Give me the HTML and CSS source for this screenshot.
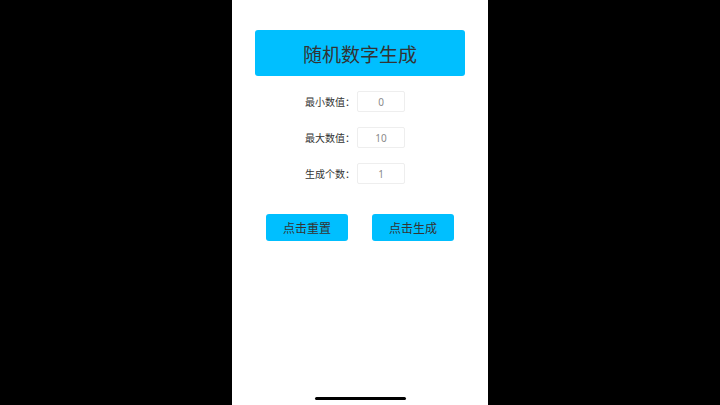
FILE: index.html
```html
<!DOCTYPE html>
<html lang="zh">
<head>
<meta charset="utf-8">
<title>随机数字生成</title>
<link rel="stylesheet" href="styles.css">
</head>
<body>
<div class="screen">
  <div class="title">随机数字生成</div>
  <div class="form">
    <div class="row"><span class="label">最小数值：</span><div class="input">0</div></div>
    <div class="row"><span class="label">最大数值：</span><div class="input">10</div></div>
    <div class="row"><span class="label">生成个数：</span><div class="input">1</div></div>
  </div>
  <div class="actions">
    <div class="btn">点击重置</div>
    <div class="btn">点击生成</div>
  </div>
  <div class="home-bar"></div>
</div>
</body>
</html>
```
FILE: styles.css
```css
html, body {
  margin: 0;
  padding: 0;
  background: #000;
  height: 100%;
}
body {
  font-family: "Noto Sans CJK SC", "Noto Sans", sans-serif;
  color: #333;
}
.screen {
  width: 256px;
  height: 405px;
  margin: 0 auto;
  background: #fff;
  display: flex;
  flex-direction: column;
  align-items: center;
  padding-top: 30px;
  box-sizing: border-box;
}
.title {
  width: 210px;
  height: 46px;
  background: #00bfff;
  border-radius: 3px;
  display: flex;
  align-items: center;
  justify-content: center;
  font-size: 19px;
  color: #333;
}
.form {
  margin-top: 15px;
  display: flex;
  flex-direction: column;
  gap: 15px;
  width: 100%;
}
.row {
  display: flex;
  justify-content: center;
  align-items: center;
  padding-right: 10px;
  height: 21px;
}
.label {
  width: 50px;
  font-size: 10px;
  color: #333;
  white-space: nowrap;
}
.input {
  width: 48px;
  height: 21px;
  margin-left: 2px;
  box-sizing: border-box;
  border: 1px solid #eee;
  border-radius: 2px;
  display: flex;
  align-items: center;
  justify-content: center;
  font-size: 10px;
  color: #8a8a8a;
  font-family: "Noto Sans", sans-serif;
}
.actions {
  margin-top: 30px;
  display: flex;
  gap: 24px;
}
.btn {
  width: 82px;
  height: 27px;
  background: #00bfff;
  border-radius: 3px;
  display: flex;
  align-items: center;
  justify-content: center;
  font-size: 12px;
  color: #333;
}
.home-bar {
  margin-top: auto;
  margin-bottom: 5px;
  width: 91px;
  height: 3px;
  border-radius: 2px;
  background: #000;
}
```
